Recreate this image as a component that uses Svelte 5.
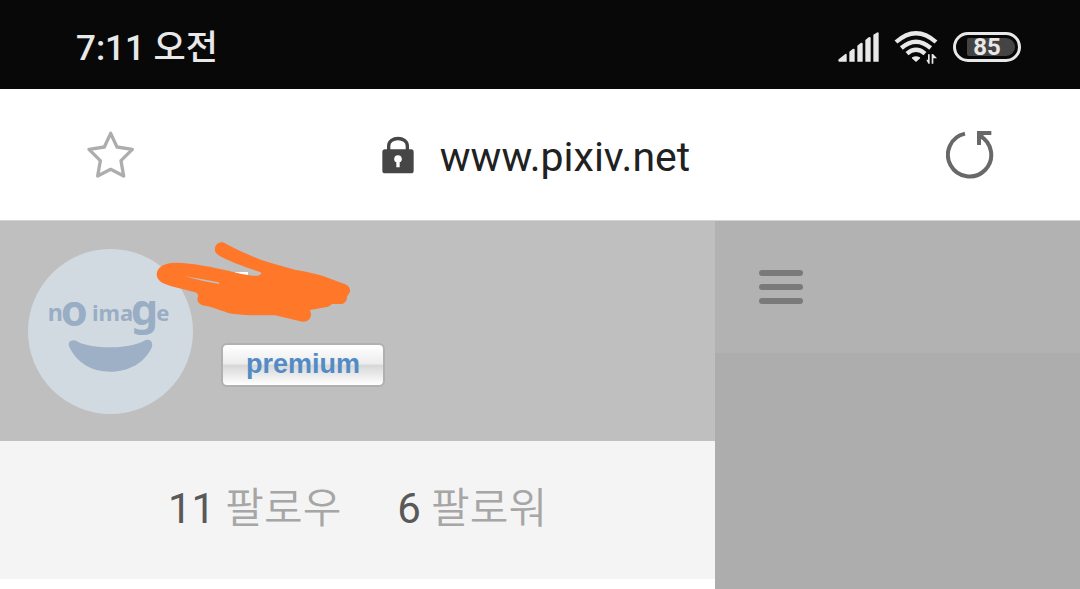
<script lang="ts">
    let time = '7:11 오전';
    let battery = 85;
    let address = 'www.pixiv.net';

    let stats = [
        {count: 11, label: '팔로우'},
        {count: 6, label: '팔로워'},
    ];
</script>

<div class="screen">
  <header class="status">
    <span class="time">{time}</span>
    <div class="indicators">
      <svg class="signal" width="42" height="30" viewBox="0 0 126 90" aria-hidden="true">
        <path d="M5 82 25 66Q29 64 29 68V89H7Q3 89 4 84Z" />
        <path d="M37 59 47 51Q53 48 53 53V89H37Z" />
        <path d="M61 41 71 33Q77 31 77 36V89H61Z" />
        <path d="M85 24 95 16Q101 13 101 19V89H85Z" />
        <path d="M109 8 119 2Q125-1 125 4V89H109Z" />
      </svg>
      <svg class="wifi" width="44" height="34" viewBox="0 0 132 102" aria-hidden="true">
        <g fill="none" stroke="#e8e8e8" stroke-width="13">
          <path d="M6 36Q66-17 126 36" />
          <path d="M22 54Q66 16 110 54" />
          <path d="M39 71Q66 48 93 71" />
        </g>
        <path d="M56 84Q66 78 76 84L66 93Z" stroke="#e8e8e8" stroke-width="5" stroke-linejoin="round" />
        <path d="M107 73V101H103L97 89H102V73ZM113 101V72H117L129 85H118V101Z" />
      </svg>
      <div class="battery"><span class="level">{battery}</span></div>
    </div>
  </header>

  <nav class="address">
    <button aria-label="Bookmark">
      <svg width="48" height="50" viewBox="0 0 144 150">
        <path d="M74 10 93 51 139 58 105 92 113 138 74 118 35 138 43 92 9 58 55 51Z" fill="none" stroke="#adadad" stroke-width="10" stroke-linejoin="round" />
      </svg>
    </button>
    <a class="url" href="#top">
      <svg width="32" height="38" viewBox="0 0 96 114" aria-hidden="true">
        <path d="M20 46V30C20 0 76 0 76 30V46" fill="none" stroke="#464646" stroke-width="10" />
        <rect x="1" y="40" width="94" height="72" rx="8" fill="#464646" />
        <path d="M48 58A11 11 0 0 1 53 79V94H43V79A11 11 0 0 1 48 58Z" fill="#fff" />
      </svg>
      <span>{address}</span>
    </a>
    <button aria-label="Reload">
      <svg width="48" height="50" viewBox="0 0 144 150">
        <path d="M57 11A65 65 0 1 0 101 17" fill="none" stroke="#686868" stroke-width="12" />
        <path d="M93 3H136V15H114L105 25V45H93Z" fill="#686868" />
      </svg>
    </button>
  </nav>

  <main>
    <aside class="drawer">
      <section class="profile">
        <svg class="avatar" width="165" height="165" viewBox="54 42 495 495" role="img">
          <circle cx="301.500" cy="289.500" r="247.500" fill="#d2dae1" />
          <g class="noimage" fill="#99adc4">
            <text x="113" y="258" font-size="70">n</text>
            <text x="152" y="272" font-size="130">o</text>
            <text x="246" y="258" font-size="66">ima</text>
            <text x="362" y="270" font-size="130">g</text>
            <text x="439" y="258" font-size="66">e</text>
          </g>
          <path d="M190 316C177 316 173 327 179 338C202 384 245 410 301 410C357 410 403 383 425 338C431 323 422 312 407 315C395 323 358 337 301 337C245 337 207 325 199 317Z" fill="#9eb0c6" />
        </svg>
        <button class="premium">premium</button>
        <svg class="scribble" width="220" height="95" viewBox="0 0 660 285" aria-hidden="true">
          <path d="M255 111H294V124H255Z" fill="#fff" />
          <path fill-rule="evenodd" fill="#ff7729" d="M222 23C199 16 188 43 199 55C208 67 270 91 335 113C330 121 323 123 312 122C285 120 265 115 235 107C190 97 130 84 78 83C45 83 20 95 20 119C22 142 49 149 70 155L133 171C145 174 146 181 142 191C142 202 151 210 166 212C203 219 225 234 253 237C294 242 338 241 375 241L451 259C470 264 484 253 483 236L480 225L531 216Q539 215 546 207H575C585 206 592 195 591 185L600 170C601 157 595 151 582 146C548 136 518 120 484 114C467 110 452 107 437 105L353 81C309 66 262 45 222 23ZM104 123L206 142L208 147Q159 140 104 123Z" />
        </svg>
      </section>
      <section class="stats">
        {#each stats as stat}
          <a href="#top"><b>{stat.count}</b> {stat.label}</a>
        {/each}
      </section>
    </aside>
    <div class="page">
      <div class="topbar">
        <button class="menu" aria-label="Menu"><i></i><i></i><i></i></button>
      </div>
    </div>
  </main>
</div>

<style>
    :global(body) {
        margin: 0;
    }

    .screen {
        min-height: 100vh;
        display: flex;
        flex-direction: column;
        background: #fff;
        font-family: Roboto, "Noto Sans CJK KR", sans-serif;
    }

    button {
        border: 0;
        padding: 0;
        background: none;
        font-family: inherit;
    }

    svg {
        display: block;
    }

    a {
        color: inherit;
        text-decoration: none;
    }

    .status {
        height: 89px;
        padding: 4px 59px 0 76px;
        box-sizing: border-box;
        display: flex;
        align-items: center;
        justify-content: space-between;
        background: #080808;
        color: #e8e8e8;
    }

    .time {
        padding-top: 4px;
        font-size: 35px;
        font-weight: 500;
        line-height: 40px;
    }

    .indicators {
        display: flex;
        align-items: center;
        gap: 15px;
    }

    .signal, .wifi {
        fill: #e8e8e8;
    }

    .battery {
        width: 68px;
        height: 30px;
        padding: 3px;
        box-sizing: border-box;
        border: 3px solid #e8e8e8;
        border-radius: 15px;
    }

    .level {
        display: block;
        margin-left: 8px;
        padding-right: 8px;
        border-radius: 2px 9px 9px 2px;
        background: #444;
        font-size: 24px;
        font-weight: 700;
        line-height: 18px;
        text-align: center;
    }

    .address {
        height: 132px;
        padding: 0 86px;
        box-sizing: border-box;
        display: flex;
        align-items: center;
        justify-content: space-between;
        border-bottom: 1px solid #d4d4d4;
    }

    .url {
        display: flex;
        align-items: center;
        gap: 26px;
        padding-right: 8px;
        color: #212121;
        font-size: 41px;
        line-height: 48px;
    }

    .url span {
        padding-top: 4px;
    }

    main {
        flex: 1;
        display: flex;
    }

    .drawer {
        width: 66.2%;
        background: #fff;
    }

    .profile {
        position: relative;
        height: 220px;
        padding: 28px;
        box-sizing: border-box;
        display: flex;
        gap: 28px;
        background: #bfbfbf;
    }

    .noimage {
        font-family: "Noto Sans", sans-serif;
        font-weight: 700;
    }

    .premium {
        align-self: flex-end;
        width: 164px;
        height: 44px;
        margin-bottom: 26px;
        padding-bottom: 2px;
        border: 2px solid #b0b0b0;
        border-radius: 6px;
        background: linear-gradient(#fff, #ececec 48%, #d6d6d6 50%, #fff);
        color: #528bc5;
        font-family: "Liberation Sans", sans-serif;
        font-size: 27px;
        font-weight: 700;
        line-height: 32px;
    }

    .scribble {
        position: absolute;
        left: 150px;
        top: 14px;
    }

    .stats {
        height: 138px;
        padding-bottom: 2px;
        box-sizing: border-box;
        display: flex;
        align-items: center;
        justify-content: center;
        gap: 56px;
        background: #f4f4f4;
        color: #a6a6a6;
        font-size: 42px;
        font-weight: 350;
        line-height: 48px;
    }

    b {
        color: #595959;
        font-weight: 400;
    }

    .page {
        flex: 1;
        background: #adadad;
    }

    .topbar {
        height: 132px;
        padding: 0 44px;
        display: flex;
        align-items: center;
        background: #b2b2b2;
    }

    .menu {
        width: 44px;
        display: grid;
        gap: 8px;
    }

    .menu i {
        height: 6px;
        border-radius: 3px;
        background: #7a7a7a;
    }
</style>
